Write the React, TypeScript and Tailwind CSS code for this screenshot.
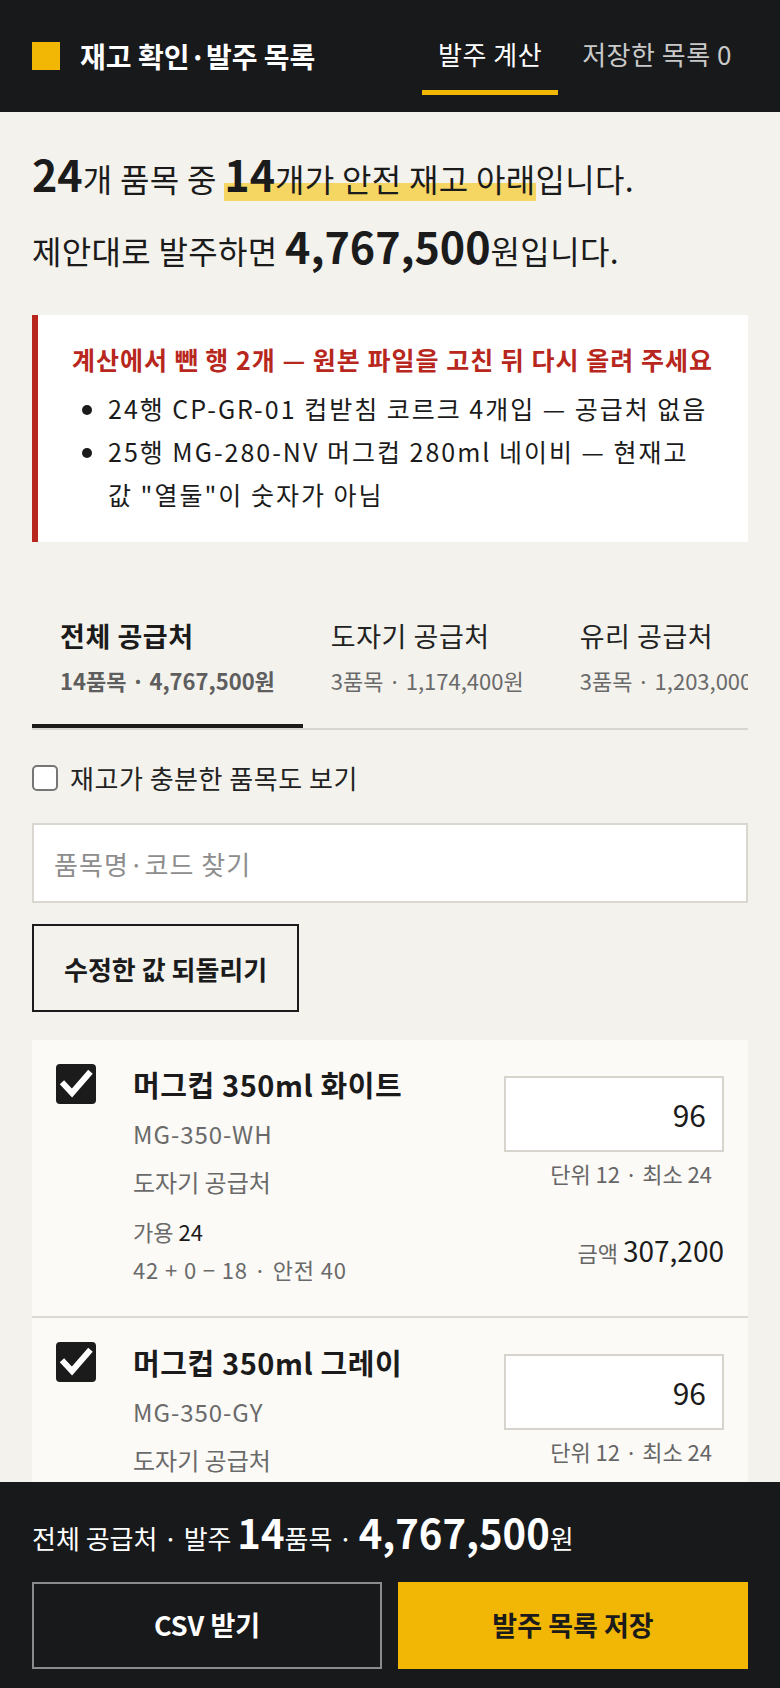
import React from "react";

function Check() {
  return (
    <span className="flex h-10 w-10 shrink-0 items-center justify-center rounded-[4px] bg-[#1b1b1b]">
      <svg width="40" height="40" viewBox="0 0 40 40" fill="none">
        <path d="M8 20.5 L16 29 L32.5 10" stroke="#ffffff" strokeWidth="6" strokeLinecap="square" strokeLinejoin="miter" />
      </svg>
    </span>
  );
}

type Item = {
  name: string;
  code: string;
  supplier: string;
  avail: string;
  calc: string;
  qty: string;
  unit: string;
  amount: string;
};

const items: Item[] = [
  { name: "머그컵 350ml 화이트", code: "MG-350-WH", supplier: "도자기 공급처", avail: "24", calc: "42 + 0 − 18 · 안전 40", qty: "96", unit: "단위 12 · 최소 24", amount: "307,200" },
  { name: "머그컵 350ml 그레이", code: "MG-350-GY", supplier: "도자기 공급처", avail: "18", calc: "30 + 0 − 12 · 안전 40", qty: "96", unit: "단위 12 · 최소 24", amount: "307,200" },
  { name: "머그컵 280ml 블랙", code: "MG-280-BK", supplier: "도자기 공급처", avail: "12", calc: "20 + 0 − 8 · 안전 30", qty: "48", unit: "단위 12 · 최소 24", amount: "129,600" },
];

function Card({ it }: { it: Item }) {
  return (
    <div className="flex border-b-2 border-[#dcdad3] bg-[#fbfaf7] px-6 pt-6 pb-[28px] last:border-b-0">
      <Check />
      <div className="ml-[37px] min-w-0 flex-1">
        <div className="text-[29px] font-bold leading-[40px] tracking-[0.02em] text-[#1b1b1b]">{it.name}</div>
        <div className="mt-[6px] text-[24px] leading-[48px] tracking-[0.04em] text-[#6a6a6a]">{it.code}</div>
        <div className="text-[24px] leading-[48px] text-[#6a6a6a]">{it.supplier}</div>
        <div className="mt-[6px] text-[22px] leading-[38px] text-[#6a6a6a]">
          가용 <span className="text-[#1b1b1b]">{it.avail}</span>
        </div>
        <div className="text-[22px] leading-[38px] tracking-[0.04em] text-[#6a6a6a]">{it.calc}</div>
      </div>
      <div className="w-[220px] shrink-0 pt-3">
        <div className="flex h-[76px] items-center justify-end border-2 border-[#d6d4cc] bg-white pr-4 text-[30px] text-[#1b1b1b]">
          {it.qty}
        </div>
        <div className="mt-[5px] pr-3 text-right text-[22px] leading-[32px] text-[#666666]">{it.unit}</div>
        <div className="mt-[41px] text-right leading-[40px]">
          <span className="text-[22px] text-[#666666]">금액 </span>
          <span className="text-[28px] text-[#1b1b1b]">{it.amount}</span>
        </div>
      </div>
    </div>
  );
}

export default function App() {
  return (
    <div className="min-h-screen bg-[#f3f2ed] pb-[220px] font-['Noto_Sans_CJK_KR','Noto_Sans',sans-serif] text-[#1b1b1b]">
      <header className="flex h-[112px] items-center bg-[#18191b] px-8">
        <span className="h-7 w-7 bg-[#f2b705]" />
        <h1 className="ml-5 text-[28px] font-bold text-white">재고 확인·발주 목록</h1>
        <nav className="ml-auto flex gap-2 self-start pt-[17px]">
          <a className="flex h-[78px] items-center border-b-[5px] border-[#f2b705] px-4 text-[26px] tracking-[0.02em] text-white">발주 계산</a>
          <a className="flex h-[78px] items-center border-b-[5px] border-transparent px-4 text-[26px] tracking-[0.02em] text-[#c9c9c9]">저장한 목록 0</a>
        </nav>
      </header>

      <main className="px-8">
        <section className="pt-[30px] text-[32px] leading-[72px] tracking-[0.01em]">
          <p>
            <b className="text-[43px] font-bold leading-none tracking-normal">24</b>개 품목 중{" "}
            <span className="bg-[linear-gradient(transparent_60%,#f6d662_60%)]">
              <b className="text-[43px] font-bold leading-none tracking-normal">14</b>개가 안전 재고 아래
            </span>
            입니다.
          </p>
          <p>
            제안대로 발주하면 <b className="text-[43px] font-bold leading-none tracking-normal">4,767,500</b>원입니다.
          </p>
        </section>

        <div className="mt-[29px] border-l-[6px] border-[#b8271d] bg-white pt-[26px] pr-[30px] pb-[26px] pl-[34px]">
          <p className="text-[25px] font-bold leading-[36px] tracking-[0.04em] text-[#b8271d]">
            계산에서 뺀 행 2개 — 원본 파일을 고친 뒤 다시 올려 주세요
          </p>
          <ul className="mt-[10px] list-disc break-keep pl-[36px] text-[25px] leading-[43px] tracking-[0.08em] text-[#1b1b1b]">
            <li>24행 CP-GR-01 컵받침 코르크 4개입 — 공급처 없음</li>
            <li>25행 MG-280-NV 머그컵 280ml 네이비 — 현재고 값 "열둘"이 숫자가 아님</li>
          </ul>
        </div>

        <div className="mt-12 flex overflow-hidden border-b-2 border-[#d7d5ce]">
          <button className="shrink-0 whitespace-nowrap border-b-4 border-[#1b1b1b] px-7 pt-7 pb-[29px] text-left">
            <div className="text-[27px] font-bold leading-[36px] tracking-[0.02em] text-[#1b1b1b]">전체 공급처</div>
            <div className="mt-[11px] text-[22px] font-bold leading-[30px] text-[#5e5e5e]">14품목 · 4,767,500원</div>
          </button>
          <button className="shrink-0 whitespace-nowrap border-b-4 border-transparent px-7 pt-7 pb-[29px] text-left">
            <div className="text-[27px] leading-[36px] tracking-[0.02em] text-[#222222]">도자기 공급처</div>
            <div className="mt-[11px] text-[22px] leading-[30px] text-[#6a6a6a]">3품목 · 1,174,400원</div>
          </button>
          <button className="shrink-0 whitespace-nowrap border-b-4 border-transparent px-7 pt-7 pb-[29px] text-left">
            <div className="text-[27px] leading-[36px] tracking-[0.02em] text-[#222222]">유리 공급처</div>
            <div className="mt-[11px] text-[22px] leading-[30px] text-[#6a6a6a]">3품목 · 1,203,000원</div>
          </button>
        </div>

        <label className="mt-[30px] flex items-center">
          <span className="h-[26px] w-[26px] rounded-[5px] border-2 border-[#767676] bg-white" />
          <span className="ml-3 text-[26px] leading-[36px] tracking-[0.02em] text-[#222222]">재고가 충분한 품목도 보기</span>
        </label>

        <input
          className="mt-[27px] block h-[80px] w-full border-2 border-[#d9d7cf] bg-white pl-5 text-[26px] tracking-[0.04em] text-[#1b1b1b] outline-none placeholder:text-[#8d8d8d]"
          placeholder="품목명·코드 찾기"
        />

        <button className="mt-[21px] h-[88px] border-2 border-[#1b1b1b] px-[30px] text-[26px] font-bold text-[#1b1b1b]">
          수정한 값 되돌리기
        </button>

        <div className="mt-[28px]">
          {items.map((it) => (
            <Card key={it.code} it={it} />
          ))}
        </div>
      </main>

      <footer className="fixed inset-x-0 bottom-0 h-[206px] bg-[#18191b] px-8 pt-[30px]">
        <p className="text-[26px] leading-[48px] text-white">
          전체 공급처 · 발주 <b className="text-[40px] font-bold leading-none">14</b>품목 ·{" "}
          <b className="text-[40px] font-bold leading-none">4,767,500</b>원
        </p>
        <div className="mt-[20px] grid grid-cols-2 gap-4">
          <button className="h-[87px] border-2 border-[#8b8b8b] text-[27px] font-bold text-white">CSV 받기</button>
          <button className="h-[87px] bg-[#f2b705] text-[27px] font-bold text-[#1b1b1b]">발주 목록 저장</button>
        </div>
      </footer>
    </div>
  );
}
